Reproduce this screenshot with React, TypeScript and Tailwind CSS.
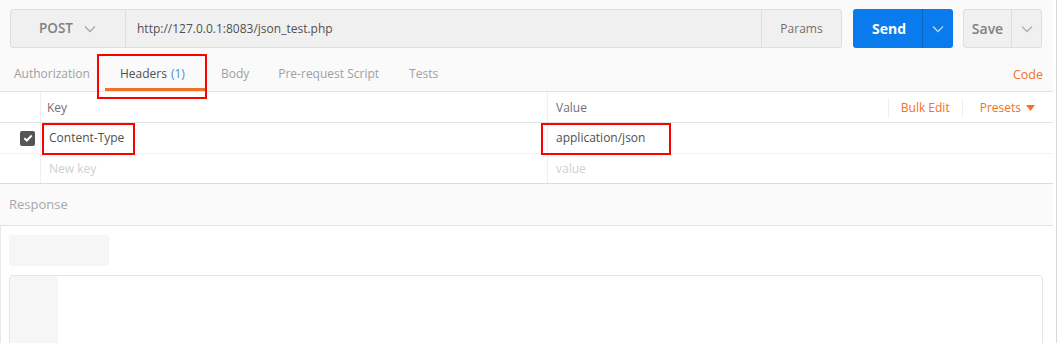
import React from "react";

const Chevron = ({ className = "", color = "#a0a0a0" }: { className?: string; color?: string }) => (
  <svg width="12" height="8" viewBox="0 0 12 8" className={className}>
    <polyline points="1,1.5 6,6.5 11,1.5" fill="none" stroke={color} strokeWidth="1.3" />
  </svg>
);

export default function App() {
  return (
    <div className="w-[1057px] h-[343px] bg-white flex overflow-hidden font-['Open_Sans',sans-serif]">
      <div className="w-[1053px] h-[343px] flex flex-col relative shrink-0">
        {/* top request bar */}
        <div className="shrink-0 bg-[#fafafa] pt-[9px] pl-[10px] pr-[11px] flex items-stretch h-[48px]">
          <div className="flex w-[832px] h-[39px] bg-[#f0f0f0] border border-[#dedede] rounded-[3px]">
            <div className="w-[115px] border-r border-[#dedede] flex items-center pl-[28px] gap-[11px]">
              <span className="text-[13.5px] font-semibold text-[#808080]">POST</span>
              <Chevron color="#a8a8a8" />
            </div>
            <div className="flex-1 flex items-center pl-[11px] text-[12px] text-[#505050]">
              http://127.0.0.1:8083/json_test.php
            </div>
            <div className="w-[80px] border-l border-[#dedede] flex items-center justify-center text-[12px] text-[#707070]">
              Params
            </div>
          </div>
          <div className="ml-[11px] w-[100px] h-[39px] bg-[#097bed] rounded-[3px] flex">
            <div className="w-[69px] flex items-center justify-center text-[14px] font-bold text-white pl-[3px]">Send</div>
            <div className="flex-1 border-l border-[#0a63bd] flex items-center justify-center">
              <Chevron color="#b9d6f5" />
            </div>
          </div>
          <div className="ml-[10px] w-[79px] h-[39px] bg-[#f0f0f0] border border-[#dedede] rounded-[3px] flex">
            <div className="w-[48px] border-r border-[#dedede] flex items-center justify-center text-[14px] font-semibold text-[#808080]">Save</div>
            <div className="flex-1 flex items-center justify-center">
              <Chevron color="#b0b0b0" />
            </div>
          </div>
        </div>

        {/* tabs */}
        <div className="shrink-0 bg-[#fafafa] h-[44px] border-b border-[#e3e3e3] flex items-stretch">
          <div className="flex items-stretch pl-[14px] pt-[8px]">
            <div className="flex items-center text-[12px] text-[#a0a0a0] pr-[15px]">Authorization</div>
            <div className="relative flex items-center text-[12px] text-[#505050] px-[15px] w-[100px]">
              Headers<span className="text-[#3b8fe0] ml-[4px]">(1)</span>
              <div className="absolute left-0 right-0 bottom-[0px] h-[3px] bg-[#f47023]" />
            </div>
            <div className="flex items-center text-[12px] text-[#a0a0a0] pl-[16px] pr-[15px]">Body</div>
            <div className="flex items-center text-[12px] text-[#a0a0a0] pl-[14px] pr-[16px]">Pre-request Script</div>
            <div className="flex items-center text-[12px] text-[#a0a0a0] pl-[14px]">Tests</div>
          </div>
          <div className="ml-auto flex items-end pb-[6px] pr-[10px] text-[12.5px] text-[#f47023]">Code</div>
        </div>

        {/* headers table */}
        <div className="shrink-0 bg-white border-b border-[#dcdcdc]">
          <div className="flex h-[31px] border-b border-[#e3e3e3]">
            <div className="w-[41px] border-r border-[#efefef]" />
            <div className="w-[507px] border-r border-[#efefef] flex items-center pl-[6px] pt-[1px] text-[12px] text-[#707070]">Key</div>
            <div className="flex-1 flex items-center pl-[8px] pt-[1px] text-[12px] text-[#707070]">
              Value
              <div className="ml-auto flex items-stretch h-[20px]">
                <div className="border-l border-[#efefef] flex items-center px-[12px] text-[12px] text-[#f47023]">Bulk Edit</div>
                <div className="border-l border-[#efefef] flex items-center pl-[17px] pr-[18px] text-[12px] text-[#f47023] gap-[5px]">
                  Presets
                  <svg width="9" height="6" viewBox="0 0 9 6"><polygon points="0,0 9,0 4.5,6" fill="#f47023" /></svg>
                </div>
              </div>
            </div>
          </div>
          <div className="flex h-[31px] border-b border-[#f2f2f2]">
            <div className="w-[41px] border-r border-[#efefef] flex items-center justify-end pr-[5px]">
              <div className="w-[15px] h-[15px] rounded-[2px] bg-[#555555] flex items-center justify-center">
                <svg width="10" height="8" viewBox="0 0 10 8"><polyline points="1.3,4.2 3.8,6.5 8.7,1.5" fill="none" stroke="white" strokeWidth="2" /></svg>
              </div>
            </div>
            <div className="w-[507px] border-r border-[#efefef] flex items-center pl-[8px] text-[12px] text-[#505050]">Content-Type</div>
            <div className="flex-1 flex items-center pl-[8px] text-[12px] text-[#505050]">application/json</div>
          </div>
          <div className="flex h-[29px]">
            <div className="w-[41px] border-r border-[#efefef]" />
            <div className="w-[507px] border-r border-[#efefef] flex items-center pl-[8px] text-[12px] text-[#cfcfcf]">New key</div>
            <div className="flex-1 flex items-center pl-[8px] text-[12px] text-[#cfcfcf]">value</div>
          </div>
        </div>

        {/* response */}
        <div className="shrink-0 bg-[#fafafa] h-[42px] border-b border-[#e3e3e3] flex items-center pl-[9px] pt-[1px] text-[13px] text-[#a8a8a8]">
          Response
        </div>
        <div className="flex-1 min-h-0 overflow-hidden bg-white border-l border-[#e8e8e8] pl-[8px] pr-[10px] pt-[9px]">
          <div className="w-[100px] h-[31px] bg-[#f6f6f6] rounded-[3px]" />
          <div className="mt-[9px] h-[120px] border border-[#e5e5e5] rounded-[4px] flex overflow-hidden">
            <div className="w-[48px] bg-[#f6f6f6]" />
          </div>
        </div>

        {/* red annotation boxes */}
        <div className="absolute left-[97px] top-[54px] w-[110px] h-[45px] border-2 border-[#ff0000]" />
        <div className="absolute left-[42px] top-[123px] w-[93px] h-[32px] border-2 border-[#ff0000]" />
        <div className="absolute left-[541px] top-[123px] w-[130px] h-[32px] border-2 border-[#ff0000]" />
      </div>
      <div className="flex-1 border-r border-[#d8d8d8]" />
    </div>
  );
}
